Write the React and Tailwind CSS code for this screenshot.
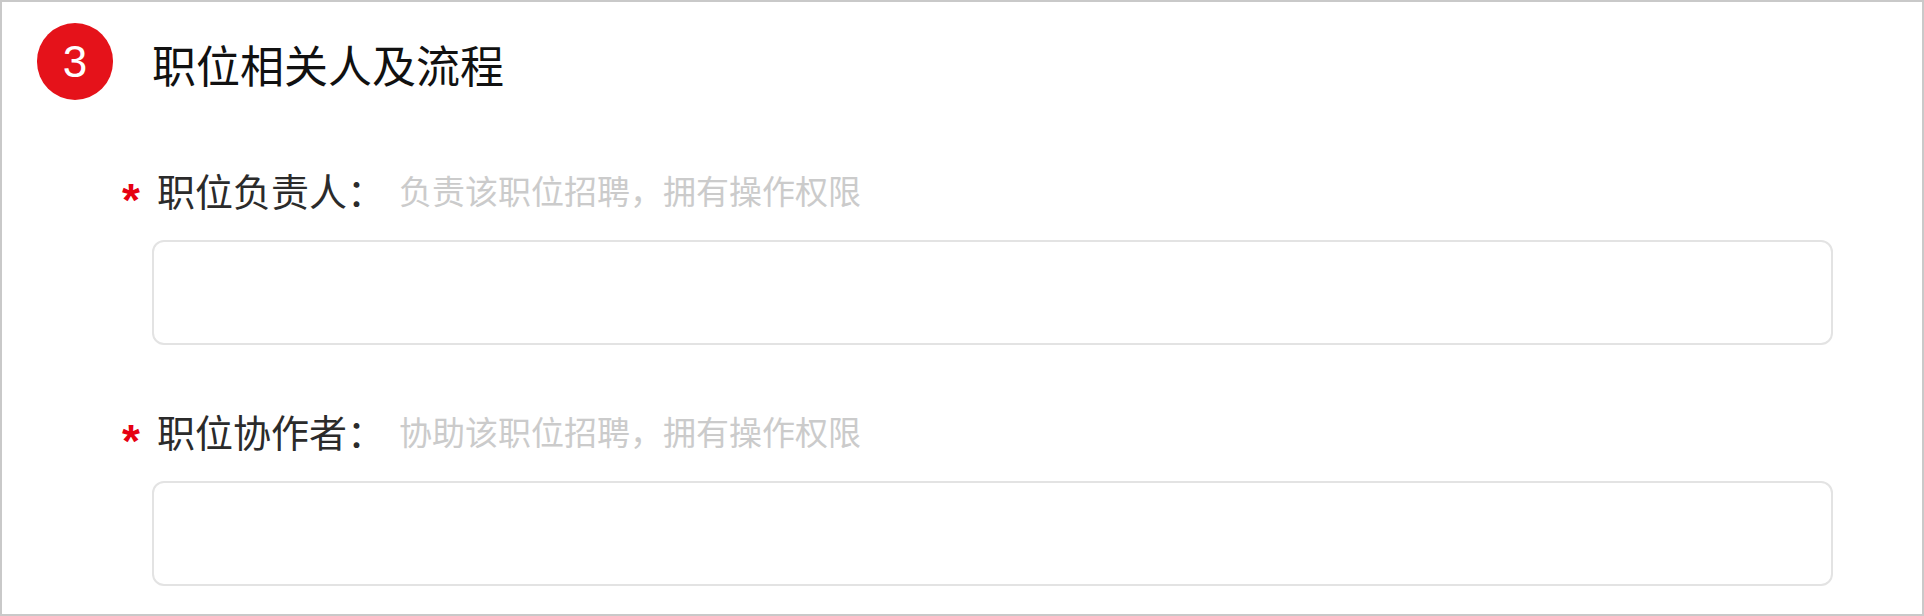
export default function App() {
  const fields = [
    { label: "职位负责人：", hint: "负责该职位招聘，拥有操作权限", mt: "mt-[70px]" },
    { label: "职位协作者：", hint: "协助该职位招聘，拥有操作权限", mt: "mt-[66px]" },
  ];

  return (
    <div
      className="w-[1924px] h-[616px] border-2 border-[#c9c9c9] bg-white overflow-hidden"
      style={{ fontFamily: '"Noto Sans CJK SC", "Noto Sans", sans-serif' }}
    >
      {/* section header */}
      <div className="flex items-center pl-[35px] pt-[21px]">
        <div className="w-[76px] h-[77px] rounded-full bg-[#e5121a] flex items-center justify-center text-white text-[44px] leading-none font-['Liberation_Sans',sans-serif]">
          3
        </div>
        <h2 className="ml-[39px] text-[44px] leading-none text-[#111] font-normal translate-y-[2px]">职位相关人及流程</h2>
      </div>

      <div className="pl-[150px] pr-[89px]">
        {fields.map((f) => (
          <div key={f.label}>
            <div className={`${f.mt} h-[40px] flex items-center -ml-[30px]`}>
              <span className="w-[35px] text-[46px] font-bold leading-none text-[#e60012] font-['Liberation_Sans',sans-serif] translate-y-[10px]">
                *
              </span>
              <span className="text-[38px] leading-none text-[#2b2b2b]">{f.label}</span>
              <span className="ml-[14px] text-[33px] leading-none text-[#cbcbcb]">{f.hint}</span>
            </div>
            <div className="mt-[30px] h-[105px] rounded-[12px] border-2 border-[#e3e3e3] bg-white" />
          </div>
        ))}
      </div>
    </div>
  );
}
